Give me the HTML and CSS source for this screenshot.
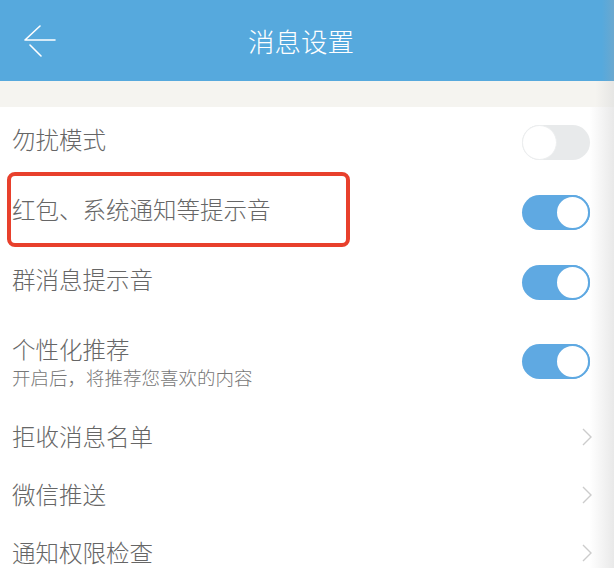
FILE: index.html
```html
<!DOCTYPE html>
<html lang="zh-CN">
<head>
    <meta charset="UTF-8">
    <meta name="viewport" content="width=device-width, initial-scale=1.0">
    <title>消息设置</title>
    <link rel="stylesheet" href="styles.css">
</head>
<body>

<header class="topbar">
    <svg class="back" width="34" height="34" viewBox="0 0 34 34">
        <path d="M2 15 L17 1 M2 15 L32 15 M7 20 L18 31" stroke="#fff" stroke-width="1.6" fill="none" stroke-linecap="round"/>
    </svg>
    <div class="title">消息设置</div>
</header>

<div class="strip"></div>

<div class="list">
    <div class="row">
        <div class="label">勿扰模式</div>
        <div class="switch"></div>
    </div>
    <div class="row marked">
        <div class="label">红包、系统通知等提示音</div>
        <div class="switch on"></div>
        <div class="mark"></div>
    </div>
    <div class="row">
        <div class="label">群消息提示音</div>
        <div class="switch on"></div>
    </div>
    <div class="row tall">
        <div class="text">
            <div class="label">个性化推荐</div>
            <div class="sub">开启后，将推荐您喜欢的内容</div>
        </div>
        <div class="switch on"></div>
    </div>
    <div class="row link">
        <div class="label">拒收消息名单</div>
        <svg class="arrow" width="10" height="18" viewBox="0 0 10 18"><polyline points="1,1 9,9 1,17" stroke="#cccccc" stroke-width="1.4" fill="none"/></svg>
    </div>
    <div class="row link">
        <div class="label">微信推送</div>
        <svg class="arrow" width="10" height="18" viewBox="0 0 10 18"><polyline points="1,1 9,9 1,17" stroke="#cccccc" stroke-width="1.4" fill="none"/></svg>
    </div>
    <div class="row link">
        <div class="label">通知权限检查</div>
        <svg class="arrow" width="10" height="18" viewBox="0 0 10 18"><polyline points="1,1 9,9 1,17" stroke="#cccccc" stroke-width="1.4" fill="none"/></svg>
    </div>
</div>

</body>
</html>
```

FILE: styles.css
```css
body {
    font-family: "Noto Sans CJK SC", "Noto Sans", sans-serif;
    margin: 0;
    padding: 0;
    width: 614px;
    height: 568px;
    overflow: hidden;
    background: linear-gradient(to right, #fff 96%, #e9e9e9 100%);
    color: #666;
}
.topbar {
    height: 81px;
    background: linear-gradient(to right, #56a9dd 98%, #6aa8cf 100%);
    position: relative;
    display: flex;
    align-items: center;
    justify-content: center;
    padding-right: 12px;
    box-sizing: border-box;
}
.back {
    position: absolute;
    left: 23px;
    top: 25px;
}
.title {
    color: #fff;
    font-size: 26.5px;
    font-weight: 300;
    margin-top: -1px;
}
.strip {
    height: 26px;
    background: linear-gradient(to right, #f5f4f0 97%, #e6e6e4 100%);
}
.row {
    height: 70px;
    display: flex;
    align-items: center;
    justify-content: space-between;
    padding: 0 24px 0 12px;
    position: relative;
}
.row > .label {
    margin-bottom: 7px;
}
.row.tall {
    height: 91px;
    padding-bottom: 2px;
    box-sizing: border-box;
}
.row.link {
    height: 58px;
    padding-right: 22px;
}
.row.link > .label {
    margin-bottom: 2px;
}
.label {
    font-size: 23.5px;
    font-weight: 300;
    line-height: 30px;
    color: #666;
}
.sub {
    font-size: 18.5px;
    font-weight: 300;
    line-height: 24px;
    color: #777;
    margin-top: 1px;
}
.switch {
    width: 68px;
    height: 35px;
    border-radius: 18px;
    background: #e8eaeb;
    position: relative;
    box-sizing: border-box;
}
.switch::after {
    content: "";
    position: absolute;
    left: 0;
    top: 0;
    width: 35px;
    height: 35px;
    border-radius: 50%;
    background: #fff;
    box-sizing: border-box;
    border: 1px solid #eceeef;
}
.switch.on {
    background: #5fa9e2;
}
.switch.on::after {
    left: auto;
    right: 0;
    border: 2px solid #5fa9e2;
}
.arrow {
    margin-right: 0;
}
.mark {
    position: absolute;
    left: 7px;
    top: -5px;
    width: 343px;
    height: 75px;
    border: 4px solid #e8402c;
    border-radius: 8px;
    box-sizing: border-box;
}
```
